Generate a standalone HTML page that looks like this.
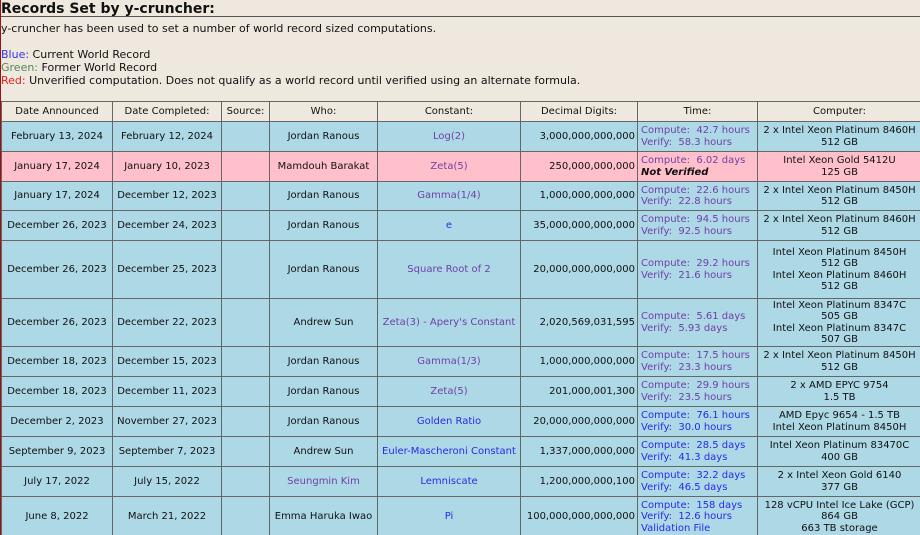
<!DOCTYPE html>
<html><head><meta charset="utf-8"><style>
html,body{margin:0;padding:0;background:#efe8de;width:920px;height:535px;overflow:hidden}
body{font-family:"DejaVu Sans",Verdana,sans-serif;font-size:11px;color:#111;border-left:1px solid #a01010;box-sizing:border-box;position:relative}
h1{font-size:14px;margin:0;height:16px;line-height:18px;border-bottom:1px solid #555}
p{margin:0;line-height:13px}
.b{color:#3333ee}.g{color:#558855}.r{color:#dd2222}
table{position:absolute;left:0;top:101px;border-collapse:collapse;table-layout:fixed;width:920px;font-size:10px}
td,th{border:1px solid #666;padding:0;text-align:center;font-weight:normal;line-height:11.5px;white-space:nowrap;overflow:hidden}
th{height:19px;background:#efe8de}
tr.c td{background:#add8e6}
tr.p td{background:#ffc0cb}
td.n{text-align:right;padding-right:2px}
td.t{text-align:left;padding-left:3px}
.v{color:#7040a8}.l{color:#2a2ae8}
</style></head><body>
<h1>Records Set by y-cruncher:</h1>
<p style="margin-top:5px">y-cruncher has been used to set a number of world record sized computations.</p>
<p style="margin-top:13px"><span class="b">Blue:</span> Current World Record</p>
<p><span class="g">Green:</span> Former World Record</p>
<p><span class="r">Red:</span> Unverified computation. Does not qualify as a world record until verified using an alternate formula.</p>
<table>
<colgroup><col style="width:111px"><col style="width:109px"><col style="width:48px"><col style="width:108px"><col style="width:143px"><col style="width:117px"><col style="width:120px"><col style="width:164px"></colgroup>
<tr><th>Date Announced</th><th>Date Completed:</th><th>Source:</th><th>Who:</th><th>Constant:</th><th>Decimal Digits:</th><th>Time:</th><th>Computer:</th></tr>
<tr class="c" style="height:30px"><td>February 13, 2024</td><td>February 12, 2024</td><td></td><td>Jordan Ranous</td><td class="v">Log(2)</td><td class="n">3,000,000,000,000</td><td class="t v">Compute:&nbsp; 42.7 hours<br>Verify:&nbsp; 58.3 hours</td><td>2 x Intel Xeon Platinum 8460H<br>512 GB</td></tr>
<tr class="p" style="height:30px"><td>January 17, 2024</td><td>January 10, 2023</td><td></td><td>Mamdouh Barakat</td><td class="v">Zeta(5)</td><td class="n">250,000,000,000</td><td class="t"><span class="v">Compute:&nbsp; 6.02 days</span><br><b><i>Not Verified</i></b></td><td>Intel Xeon Gold 5412U<br>125 GB</td></tr>
<tr class="c" style="height:29px"><td>January 17, 2024</td><td>December 12, 2023</td><td></td><td>Jordan Ranous</td><td class="v">Gamma(1/4)</td><td class="n">1,000,000,000,000</td><td class="t v">Compute:&nbsp; 22.6 hours<br>Verify:&nbsp; 22.8 hours</td><td>2 x Intel Xeon Platinum 8450H<br>512 GB</td></tr>
<tr class="c" style="height:30px"><td>December 26, 2023</td><td>December 24, 2023</td><td></td><td>Jordan Ranous</td><td class="l">e</td><td class="n">35,000,000,000,000</td><td class="t v">Compute:&nbsp; 94.5 hours<br>Verify:&nbsp; 92.5 hours</td><td>2 x Intel Xeon Platinum 8460H<br>512 GB</td></tr>
<tr class="c" style="height:58px"><td>December 26, 2023</td><td>December 25, 2023</td><td></td><td>Jordan Ranous</td><td class="v">Square Root of 2</td><td class="n">20,000,000,000,000</td><td class="t v">Compute:&nbsp; 29.2 hours<br>Verify:&nbsp; 21.6 hours</td><td>Intel Xeon Platinum 8450H<br>512 GB<br>Intel Xeon Platinum 8460H<br>512 GB</td></tr>
<tr class="c" style="height:48px"><td>December 26, 2023</td><td>December 22, 2023</td><td></td><td>Andrew Sun</td><td class="v">Zeta(3) - Apery's Constant</td><td class="n">2,020,569,031,595</td><td class="t v">Compute:&nbsp; 5.61 days<br>Verify:&nbsp; 5.93 days</td><td>Intel Xeon Platinum 8347C<br>505 GB<br>Intel Xeon Platinum 8347C<br>507 GB</td></tr>
<tr class="c" style="height:30px"><td>December 18, 2023</td><td>December 15, 2023</td><td></td><td>Jordan Ranous</td><td class="v">Gamma(1/3)</td><td class="n">1,000,000,000,000</td><td class="t v">Compute:&nbsp; 17.5 hours<br>Verify:&nbsp; 23.3 hours</td><td>2 x Intel Xeon Platinum 8450H<br>512 GB</td></tr>
<tr class="c" style="height:30px"><td>December 18, 2023</td><td>December 11, 2023</td><td></td><td>Jordan Ranous</td><td class="v">Zeta(5)</td><td class="n">201,000,001,300</td><td class="t v">Compute:&nbsp; 29.9 hours<br>Verify:&nbsp; 23.5 hours</td><td>2 x AMD EPYC 9754<br>1.5 TB</td></tr>
<tr class="c" style="height:30px"><td>December 2, 2023</td><td>November 27, 2023</td><td></td><td>Jordan Ranous</td><td class="l">Golden Ratio</td><td class="n">20,000,000,000,000</td><td class="t l">Compute:&nbsp; 76.1 hours<br>Verify:&nbsp; 30.0 hours</td><td>AMD Epyc 9654 - 1.5 TB<br>Intel Xeon Platinum 8450H</td></tr>
<tr class="c" style="height:30px"><td>September 9, 2023</td><td>September 7, 2023</td><td></td><td>Andrew Sun</td><td class="l">Euler-Mascheroni Constant</td><td class="n">1,337,000,000,000</td><td class="t l">Compute:&nbsp; 28.5 days<br>Verify:&nbsp; 41.3 days</td><td>Intel Xeon Platinum 83470C<br>400 GB</td></tr>
<tr class="c" style="height:30px"><td>July 17, 2022</td><td>July 15, 2022</td><td></td><td class="v">Seungmin Kim</td><td class="l">Lemniscate</td><td class="n">1,200,000,000,100</td><td class="t l">Compute:&nbsp; 32.2 days<br>Verify:&nbsp; 46.5 days</td><td>2 x Intel Xeon Gold 6140<br>377 GB</td></tr>
<tr class="c" style="height:41px"><td>June 8, 2022</td><td>March 21, 2022</td><td></td><td>Emma Haruka Iwao</td><td class="l">Pi</td><td class="n">100,000,000,000,000</td><td class="t l">Compute:&nbsp; 158 days<br>Verify:&nbsp; 12.6 hours<br>Validation File</td><td>128 vCPU Intel Ice Lake (GCP)<br>864 GB<br>663 TB storage</td></tr>
</table>
</body></html>
